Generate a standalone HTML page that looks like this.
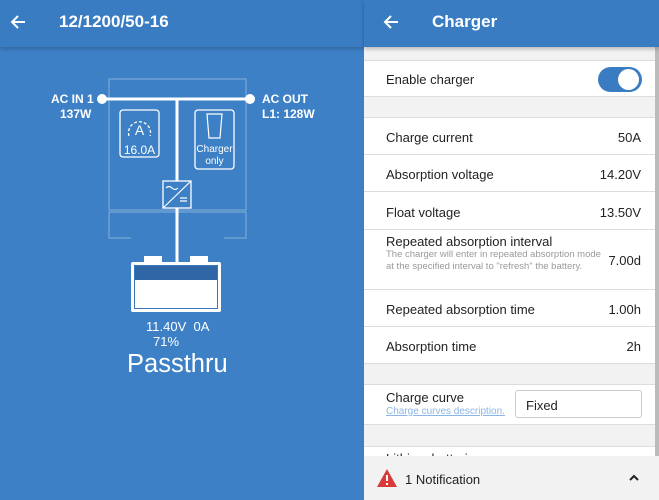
<!DOCTYPE html>
<html><head><style>
*{margin:0;padding:0;box-sizing:border-box}
body{width:659px;height:500px;overflow:hidden;font-family:"Liberation Sans",sans-serif;position:relative;background:#f2f2f2}
.l{position:absolute;left:0;top:0;width:364px;height:500px;background:#3d80c6}
.lh{position:absolute;left:0;top:0;width:364px;height:47px;background:#3a7cc2;box-shadow:0 2px 4px rgba(0,0,0,.2)}
.t{position:absolute;color:#fff}
.r{position:absolute;left:364px;top:0;width:295px;height:500px;background:#f2f2f2}
.rh{position:absolute;left:0;top:0;width:295px;height:47px;background:#3a7cc2;box-shadow:0 2px 4px rgba(0,0,0,.25);z-index:2}
.row{position:absolute;left:0;width:291px;background:#fff;border-top:1px solid #ddd;border-bottom:1px solid #ddd;font-size:13px;color:#222}
.row .a{position:absolute;left:22px}
.row .v{position:absolute;right:14px}
</style></head><body>
<div class="l">
<div class="lh">
<svg style="position:absolute;left:9px;top:13px" width="18" height="18" viewBox="0 0 18 18"><path d="M16 9H3M9 3L3 9l6 6" stroke="#fff" stroke-width="2" fill="none"/></svg>
<div class="t" style="left:59px;top:12px;font-size:17px;font-weight:bold">12/1200/50-16</div>
</div>
<svg style="position:absolute;left:0;top:0" width="364" height="500">
<g stroke="rgba(255,255,255,.25)" stroke-width="1.5" fill="none">
<rect x="109" y="79" width="137" height="131"/>
<line x1="109" y1="212" x2="246" y2="212"/>
<path d="M109 212V238H131M246 212V238H224"/>
</g>
<line x1="102" y1="99" x2="250" y2="99" stroke="#fff" stroke-width="3"/>
<circle cx="102" cy="99" r="5" fill="#fff"/><circle cx="250" cy="99" r="5" fill="#fff"/>
<line x1="177" y1="99" x2="177" y2="262" stroke="#fff" stroke-width="3"/>
<rect x="120" y="110" width="39" height="47" rx="3" fill="#3d80c6" stroke="#fff" stroke-width="1.3"/>
<path d="M129 136a11 11 0 1 1 21 0" stroke="#fff" stroke-width="1.3" fill="none" stroke-dasharray="3 2"/>
<text x="139.5" y="135" fill="#fff" font-size="14" text-anchor="middle" font-family="Liberation Sans">A</text>
<text x="139.5" y="154" fill="#fff" font-size="12" text-anchor="middle" font-family="Liberation Sans">16.0A</text>
<rect x="195" y="110" width="39" height="59" rx="3" fill="#3d80c6" stroke="#fff" stroke-width="1.3"/>
<path d="M207 114h15l-2 24h-11z" stroke="#fff" stroke-width="1.2" fill="none"/>
<text x="214.5" y="152" fill="#fff" font-size="10" text-anchor="middle" font-family="Liberation Sans">Charger</text>
<text x="214.5" y="164" fill="#fff" font-size="10" text-anchor="middle" font-family="Liberation Sans">only</text>
<rect x="163" y="181" width="28" height="27" fill="#3d80c6" stroke="#fff" stroke-width="1.3"/>
<path d="M163 208L191 181" stroke="#fff" stroke-width="1.2"/>
<path d="M166 188q3-3 6 0t6 0" stroke="#fff" stroke-width="1.2" fill="none"/>
<path d="M180 198h7M180 201h7" stroke="#fff" stroke-width="1.2"/>
<rect x="131" y="262" width="90" height="50" rx="2" fill="#fff"/>
<rect x="144" y="256" width="18" height="7" fill="#fff"/><rect x="190" y="256" width="18" height="7" fill="#fff"/>
<rect x="135" y="266" width="82" height="14" fill="#2f66a6"/>
<rect x="134.5" y="265.5" width="83" height="43" fill="none" stroke="#3a78bb" stroke-width="1"/>
</svg>
<div class="t" style="left:51px;top:92px;font-size:12px;font-weight:bold">AC IN 1</div>
<div class="t" style="left:60px;top:107px;font-size:12px;font-weight:bold">137W</div>
<div class="t" style="left:262px;top:92px;font-size:12px;font-weight:bold">AC OUT</div>
<div class="t" style="left:262px;top:107px;font-size:12px;font-weight:bold">L1: 128W</div>
<div class="t" style="left:146px;top:319px;font-size:13px">11.40V&nbsp;&nbsp;0A</div>
<div class="t" style="left:153px;top:334px;font-size:13px">71%</div>
<div class="t" style="left:127px;top:350px;font-size:25.5px">Passthru</div>
</div>
<div class="r">
<div class="rh">
<svg style="position:absolute;left:18px;top:13px" width="18" height="18" viewBox="0 0 18 18"><path d="M16 9H3M9 3L3 9l6 6" stroke="#fff" stroke-width="2" fill="none"/></svg>
<div class="t" style="left:68px;top:12px;font-size:17px;font-weight:bold">Charger</div>
</div>
<div style="position:absolute;right:0;top:47px;width:4px;height:409px;background:#bbb"></div>
<div class="row" style="top:60px;height:37px"><span class="a" style="top:11px">Enable charger</span>
<div style="position:absolute;left:234px;top:6px;width:44px;height:25px;border-radius:13px;background:#3a7cc2"><div style="position:absolute;right:3px;top:2px;width:21px;height:21px;border-radius:50%;background:#fff"></div></div></div>
<div class="row" style="top:117px;height:38px"><span class="a" style="top:12px">Charge current</span><span class="v" style="top:12px">50A</span></div>
<div class="row" style="top:154px;height:38px"><span class="a" style="top:12px">Absorption voltage</span><span class="v" style="top:12px">14.20V</span></div>
<div class="row" style="top:191px;height:39px"><span class="a" style="top:13px">Float voltage</span><span class="v" style="top:13px">13.50V</span></div>
<div class="row" style="top:229px;height:61px"><span class="a" style="top:4px">Repeated absorption interval</span>
<span class="a" style="top:19px;font-size:9.5px;color:#999;width:215px;line-height:11.5px">The charger will enter in repeated absorption mode at the specified interval to "refresh" the battery.</span><span class="v" style="top:23px">7.00d</span></div>
<div class="row" style="top:289px;height:38px"><span class="a" style="top:12px">Repeated absorption time</span><span class="v" style="top:12px">1.00h</span></div>
<div class="row" style="top:326px;height:38px"><span class="a" style="top:12px">Absorption time</span><span class="v" style="top:12px">2h</span></div>
<div class="row" style="top:384px;height:41px"><span class="a" style="top:5px">Charge curve</span>
<span class="a" style="top:21px;font-size:10px;color:#8ab6e6;text-decoration:underline">Charge curves description.</span>
<div style="position:absolute;left:151px;top:5px;width:127px;height:28px;border:1px solid #ccc;border-radius:3px;padding:7px 10px">Fixed</div></div>
<div class="row" style="top:446px;height:20px;border-bottom:none"><span class="a" style="top:4px">Lithium batteries</span></div>
<div style="position:absolute;left:0;top:456px;width:295px;height:44px;background:#f2f2f2;z-index:3">
<svg style="position:absolute;left:13px;top:13px" width="20" height="18" viewBox="0 0 20 18"><path d="M10 0L20 18H0z" fill="#d83a3a"/><path d="M10 6v6M10 14v2" stroke="#fff" stroke-width="2"/></svg>
<span style="position:absolute;left:41px;top:16px;font-size:13px;color:#222">1 Notification</span>
<svg style="position:absolute;left:265px;top:18px" width="10" height="8"><path d="M1 6l4-4 4 4" stroke="#222" stroke-width="2" fill="none"/></svg>
</div>
</div>
</body></html>
